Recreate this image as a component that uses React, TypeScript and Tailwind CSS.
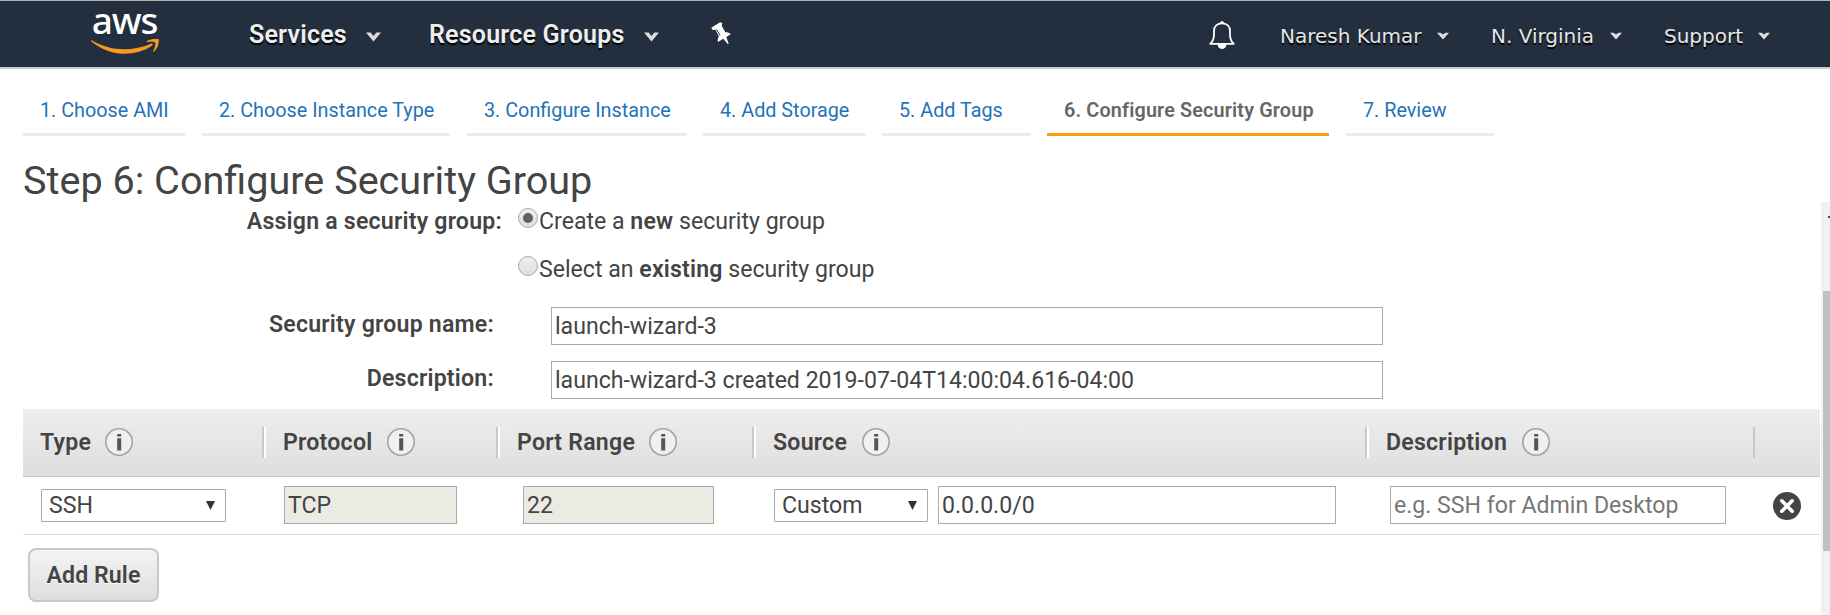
import React from "react";

type Tab = { label: string; width: string; active?: boolean };

const tabs: Tab[] = [
  { label: "1. Choose AMI", width: "w-[162px] mr-[17px]" },
  { label: "2. Choose Instance Type", width: "w-[248px] mr-[17px]" },
  { label: "3. Configure Instance", width: "w-[220px] mr-4" },
  { label: "4. Add Storage", width: "w-[163px] mr-4" },
  { label: "5. Add Tags", width: "w-[149px] mr-4" },
  { label: "6. Configure Security Group", width: "w-[282px] mr-[17px]", active: true },
  { label: "7. Review", width: "w-[148px]" },
];

function Caret({ small }: { small?: boolean }) {
  return small ? (
    <svg className="mt-[31px] h-2 w-3 shrink-0" viewBox="0 0 12 8">
      <path d="M0 .8h3.6L6 2.6 8.4.8H12L6 7.6z" fill="#dcdcdc" />
    </svg>
  ) : (
    <svg className="mt-[31px] h-[10px] w-[15px] shrink-0" viewBox="0 0 15 10">
      <path d="M0 .5h4.6l2.900 3.400L10.400 .5H15L7.500 9.600z" fill="#dcdcdc" />
    </svg>
  );
}

function AwsLogo() {
  return (
    <div className="ml-[91px] flex w-[68px] shrink-0 flex-col items-center">
      <span className="mt-[-7px] h-[45px] pr-[1px] font-['Noto_Sans'] text-[37px] leading-[52px] font-medium tracking-[-1.2px] text-white">
        aws
      </span>
      <svg className="h-[16px] w-[68px]" viewBox="0 0 68 16">
        <path
          d="M.6 1.200C10 6.800 21 10.200 33.500 10.200c8.500 0 18-1.900 26.500-5.500 1.300-.5 2.400.9 1.100 1.900C53.500 12.200 43 14.800 34 14.800 21.500 14.800 9.500 10.200.2 2.200-.3 1.700 0 .9.600 1.200z"
          fill="#f7981f"
        />
        <path
          d="M55.600 2.200C58.600.1 63.500-.2 67-.1c.8.100 1 .8.900 1.500-.3 4.300-1.700 8.300-4.900 11.300-.5.500-1.100.2-.8-.5 1-2.500 2.800-7 2-8.500-.9-1.300-5.400-.8-8-.6-.800.100-1.100-.5-.600-.900z"
          fill="#f7981f"
        />
      </svg>
    </div>
  );
}

function Pin() {
  return (
    <svg className="mt-[21px] ml-[52px] h-[23px] w-5 shrink-0" viewBox="0 0 20 23">
      <path
        d="M.3 5.800 9 .2l2.300.8-.6 2.800 3.600 6.500c2-.1 4 .5 5.500 1.900l-4.500 2.900 2.400 6.700-.8.500-4.600-5.600-5.300 3.400c-.6-2-.2-4 .9-5.700L4.400 7.700 1.600 8z"
        fill="#fff"
      />
      <path d="M5.500 7.400 9 13.400" stroke="#232f3e" strokeWidth="1" />
    </svg>
  );
}

function Bell() {
  return (
    <svg className="mt-5 h-7 w-[26px] shrink-0" viewBox="0 0 26 28" fill="none">
      <path
        d="M1.300 22.800h23.400c-2.300-2-3.700-5.500-3.700-9.300V10c0-4.700-3.200-7.700-8-7.700S5 5.300 5 10v3.500c0 3.800-1.400 7.300-3.700 9.300z"
        stroke="#fff"
        strokeWidth="1.800"
        strokeLinejoin="round"
      />
      <path d="M11.500 2a1.500 1.500 0 0 1 3 0zM9 23.500a4 4 0 0 0 8 0z" fill="#fff" stroke="#fff" />
    </svg>
  );
}

function Info() {
  return (
    <svg className="h-[30px] w-[30px] shrink-0" viewBox="0 0 30 30">
      <circle cx="15" cy="15" r="13.200" fill="#f0f0f0" stroke="#a3a3a3" strokeWidth="1.600" />
      <path d="M13.200 7h4v2.600h-4zM13.200 11.200h4V23.500h-4z" fill="#555" />
    </svg>
  );
}

function Arrow() {
  return (
    <svg className="mb-[2px] h-[9px] w-[9px] shrink-0" viewBox="0 0 9 9">
      <path d="M0 0h9L4.500 9z" fill="#333" />
    </svg>
  );
}

function HeaderCell({ label, className, textClass, divider }: { label: string; className: string; textClass: string; divider: string }) {
  return (
    <div className={`flex shrink-0 items-start ${className}`}>
      {divider && <div className={`mt-[18px] h-[31px] shrink-0 border-l-2 border-[#c8c8c8] ${divider}`} />}
      {label && (
        <>
          <span className={`mt-[19px] shrink-0 leading-[30px] font-semibold tracking-[0.24px] ${textClass}`}>{label}</span>
          <span className="mt-[18px]">
            <Info />
          </span>
        </>
      )}
    </div>
  );
}

function Radio({ checked }: { checked?: boolean }) {
  return (
    <span className="flex h-5 w-5 shrink-0 items-center justify-center rounded-full border border-[#a9a9a9] bg-gradient-to-b from-[#f0f0f0] to-[#dcdcdc]">
      {checked && <span className="h-[10px] w-[10px] rounded-full bg-[#606060]" />}
    </span>
  );
}

const box = "flex h-[38px] shrink-0 items-center border border-[#a9a9a9] pt-[2px] pl-[3px]";
const select = "flex h-[33px] shrink-0 items-center justify-between rounded-[1px] border border-[#a9a9a9] bg-white pt-[2px] pr-[10px] pl-[7px]";
const userText = "mt-[19px] shrink-0 font-['DejaVu_Sans'] text-[20px] leading-[32px] text-[#e6e6e6] [text-shadow:0_2px_1px_#000]";
const navText = "mt-[18px] shrink-0 text-[25px] leading-[32px] font-semibold tracking-[0.2px] text-[#eee] [text-shadow:0_2px_1px_#000]";

export default function App() {
  return (
    <div className="flex h-[615px] w-[1830px] flex-col overflow-hidden bg-white font-['Roboto',sans-serif] text-[23.1px] whitespace-nowrap text-[#444]">
      <header className="flex h-[69px] shrink-0 items-start border-t border-b-2 border-t-[#b3b3b3] border-b-[#c8cacd] bg-[#232f3e]">
        <AwsLogo />
        <span className={`ml-[90px] w-[117px] ${navText}`}>Services</span>
        <Caret />
        <span className={`ml-[48px] w-[215px] ${navText}`}>Resource Groups</span>
        <Caret />
        <Pin />
        <div className="ml-[478px] flex">
          <Bell />
        </div>
        <span className={`ml-[45px] w-[157px] ${userText}`}>Naresh Kumar</span>
        <Caret small />
        <span className={`ml-[42px] w-[119px] ${userText}`}>N. Virginia</span>
        <Caret small />
        <span className={`ml-[42px] w-[94px] ${userText}`}>Support</span>
        <Caret small />
      </header>

      <nav className="flex h-[67px] shrink-0 pl-[23px] text-[19.8px]">
        {tabs.map((t) => (
          <div
            key={t.label}
            className={`shrink-0 border-b-[3px] pt-[27px] pl-[17px] leading-[30px] ${t.width} ${
              t.active ? "border-[#ff9914] font-semibold tracking-[0.16px] text-[#666]" : "border-[#ebebeb] text-[#1f73b7]"
            }`}
          >
            {t.label}
          </div>
        ))}
      </nav>

      <h1 className="h-[66px] shrink-0 pt-[21px] pl-[23px] text-[39.6px] leading-[48px] text-[#444]">Step 6: Configure Security Group</h1>

      <div className="flex h-[413px] shrink-0">
        <main className="flex w-[1821px] flex-col">
          <div className="flex h-[48px] shrink-0 pt-[6px]">
            <span className="w-[502px] text-right leading-[27px] font-semibold tracking-[0.22px]">Assign a security group:</span>
            <label className="ml-[16px] flex">
              <Radio checked />
              <span className="ml-[1px] leading-[27px]">
                Create a <b className="font-semibold tracking-[0.2px]">new</b> security group
              </span>
            </label>
          </div>
          <div className="flex h-[57px] shrink-0 pt-[6px] pl-[518px]">
            <Radio />
            <span className="ml-[1px] leading-[27px]">
              Select an <b className="font-semibold tracking-[0.2px]">existing</b> security group
            </span>
          </div>
          <div className="flex h-[54px] shrink-0">
            <span className="mr-[57px] w-[494px] pt-[4px] text-right leading-[27px] font-semibold tracking-[0.22px]">Security group name:</span>
            <div className={`${box} w-[832px]`}>launch-wizard-3</div>
          </div>
          <div className="flex h-[48px] shrink-0">
            <span className="mr-[57px] w-[494px] pt-[4px] text-right leading-[27px] font-semibold tracking-[0.22px]">Description:</span>
            <div className={`${box} w-[832px]`}>launch-wizard-3 created 2019-07-04T14:00:04.616-04:00</div>
          </div>

          <div className="ml-[23px] flex h-[68px] w-[1797px] shrink-0 border-b border-[#c8c8c8] bg-gradient-to-b from-[#eeeeee] to-[#dedede]">
            <HeaderCell label="Type" className="w-[239px] pl-[17px]" textClass="w-[64px]" divider="" />
            <HeaderCell label="Protocol" className="w-[234px]" textClass="ml-[17px] w-[103px]" divider="w-1 border-r-2 border-r-white" />
            <HeaderCell label="Port Range" className="w-[256px]" textClass="ml-[17px] w-[131px]" divider="w-1 border-r-2 border-r-white" />
            <HeaderCell label="Source" className="w-[613px]" textClass="ml-[17px] w-[88px]" divider="w-1 border-r-2 border-r-white" />
            <HeaderCell label="Description" className="w-[388px]" textClass="ml-[17px] w-[135px]" divider="w-1 border-r-2 border-r-white" />
            <HeaderCell label="" className="w-[67px]" textClass="" divider="w-[2px]" />
          </div>

          <div className="ml-[23px] flex h-[58px] w-[1797px] shrink-0 items-center border-b border-[#ddd] pb-[1px]">
            <div className={`${select} ml-[18px] w-[185px]`}>
              SSH
              <Arrow />
            </div>
            <div className={`${box} ml-[58px] w-[173px] bg-[#ebebe4]`}>TCP</div>
            <div className={`${box} ml-[66px] w-[191px] bg-[#ebebe4]`}>22</div>
            <div className={`${select} ml-[60px] w-[154px]`}>
              Custom
              <Arrow />
            </div>
            <div className={`${box} ml-[10px] w-[398px]`}>0.0.0.0/0</div>
            <div className={`${box} ml-[54px] w-[336px] text-[#777]`}>e.g. SSH for Admin Desktop</div>
            <svg className="mt-[2px] ml-[47px] h-7 w-7 shrink-0" viewBox="0 0 28 28">
              <circle cx="14" cy="14" r="14" fill="#444" />
              <path d="m8.800 8.800 10.400 10.400m0-10.400-10.400 10.400" stroke="#fff" strokeWidth="3.600" strokeLinecap="round" />
            </svg>
          </div>

          <button className="mt-[13px] ml-7 flex h-[54px] w-[131px] shrink-0 items-center justify-center rounded-lg border-2 border-[#c8c8c8] bg-gradient-to-b from-[#f4f4f4] to-[#dedede] pt-[2px] font-semibold tracking-[0.1px] [text-shadow:0_1px_0_#fff]">
            Add Rule
          </button>
        </main>
        <aside className="flex w-[9px] flex-col items-end bg-[#f1f1f1]">
          <span className="mt-[14px] h-[2px] w-[2px] bg-[#505050]" />
          <span className="mt-[73px] h-[260px] w-[7px] bg-[#c1c1c1]" />
        </aside>
      </div>
    </div>
  );
}
